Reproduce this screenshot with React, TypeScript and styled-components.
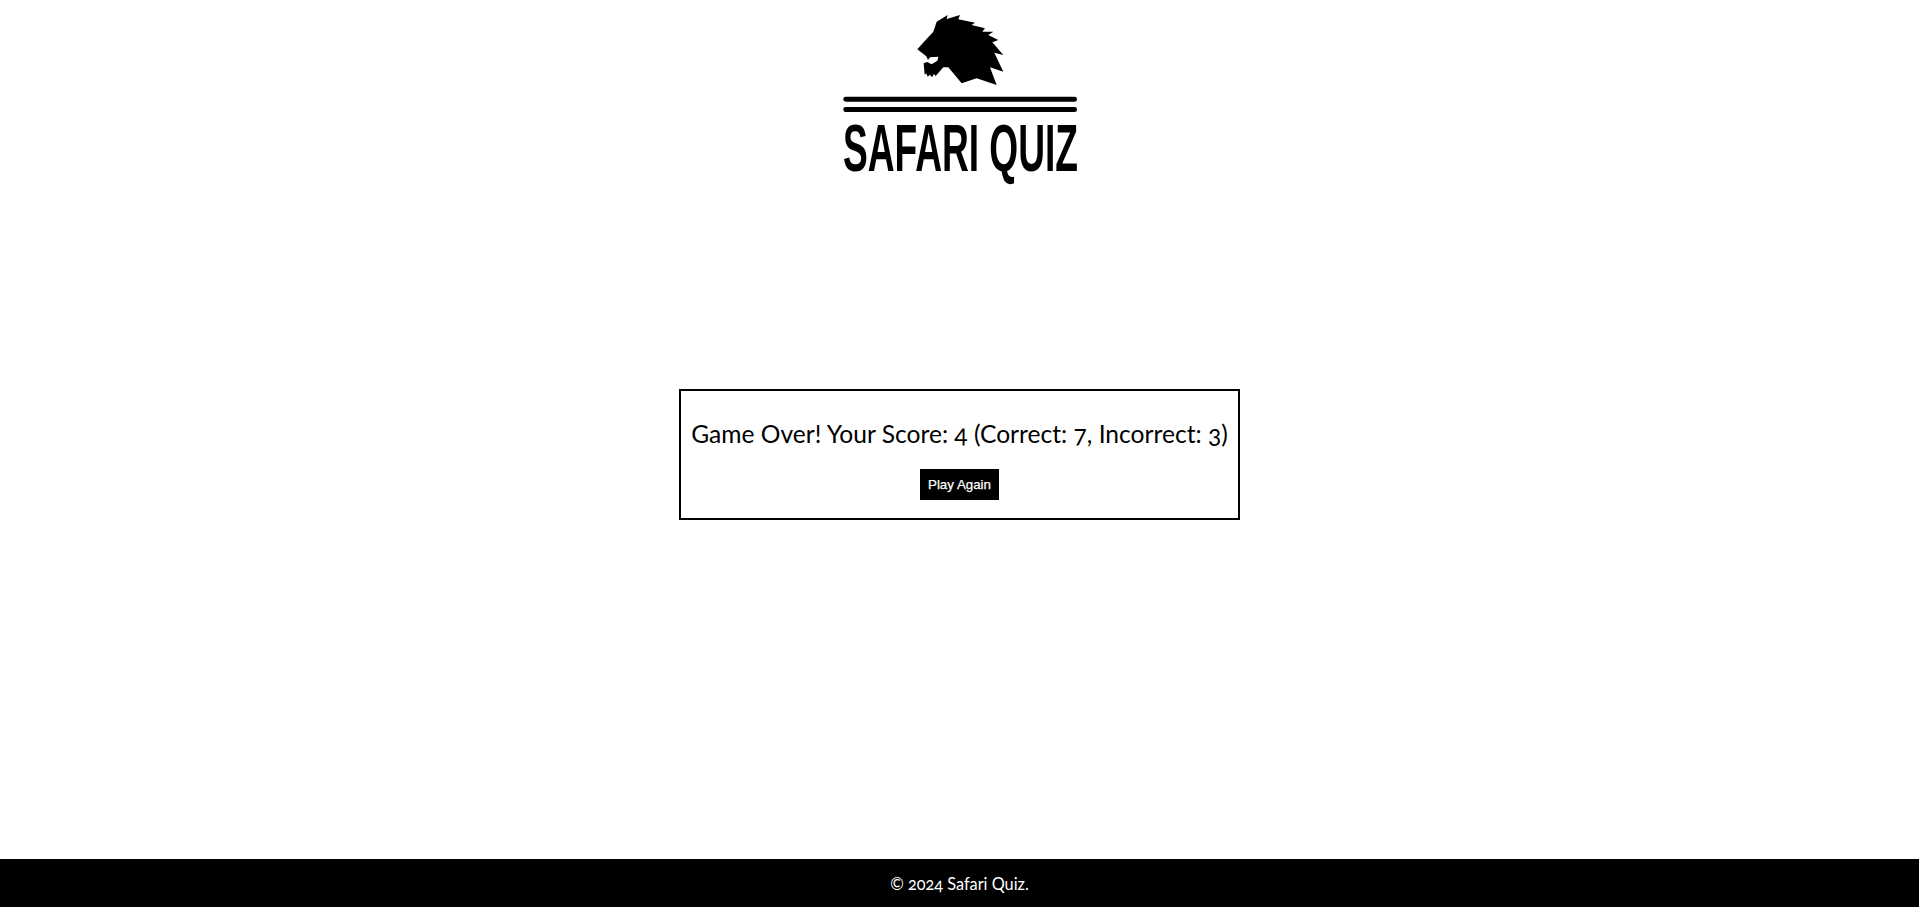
import { FC } from "react"
import styled, { createGlobalStyle } from "styled-components"

const App: FC = () => {
  return (
    <Page>
      <GlobalStyle />
      <Header>
        <Logo />
      </Header>
      <Main>
        <ScoreBox>
          <ScoreText>Game Over! Your Score: 4 (Correct: 7, Incorrect: 3)</ScoreText>
          <PlayButton>Play Again</PlayButton>
        </ScoreBox>
      </Main>
      <Footer>© 2024 Safari Quiz.</Footer>
    </Page>
  )
}

const Logo: FC = () => (
  <LogoSvg viewBox="-20 0 319 190" aria-label="Safari Quiz">
    <g transform="scale(0.3333)" fill="#000">
      <path d="M292 148 L315 122 L340 95 L350 65 L383 45 L380 57 L420 45 L415 58 L465 68 L455 75 L495 85 L487 95 L520 95 L505 105 L535 120 L517 127 L550 165 L523 158 L550 215 L510 202 L530 255 L470 235 L425 250 L385 202 L370 202 L347 228 L342 222 L336 232 L330 224 L323 230 L319 220 L314 224 L311 190 L322 186 L335 193 L352 182 L355 170 L330 172 L324 180 L319 169 Z" />
      <rect x="70" y="290" width="701" height="15" rx="7" />
      <rect x="70" y="321" width="701" height="15" rx="7" />
    </g>
    <LogoText x="23" y="170.5" textLength="235" lengthAdjust="spacingAndGlyphs">
      SAFARI QUIZ
    </LogoText>
  </LogoSvg>
)

const GlobalStyle = createGlobalStyle`
  html, body {
    margin: 0;
    padding: 0;
    background: #fff;
    font-family: "Lato", "Open Sans", sans-serif;
  }
`

const Page = styled.div`
  min-height: 100vh;
  display: flex;
  flex-direction: column;
`

const Header = styled.header`
  display: flex;
  justify-content: center;
  height: 190px;
`

const LogoSvg = styled.svg`
  display: block;
  width: 319px;
  height: 190px;
`

const LogoText = styled.text`
  font-family: "Liberation Sans Narrow", "Liberation Sans", sans-serif;
  font-weight: 700;
  font-size: 66px;
  fill: #000;
`

const Main = styled.main`
  flex: 1;
  display: flex;
  justify-content: center;
  align-items: flex-start;
  padding-top: 199px;
`

const ScoreBox = styled.div`
  box-sizing: border-box;
  width: 561px;
  height: 131px;
  border: 2px solid #000;
  display: flex;
  flex-direction: column;
  align-items: center;
  padding-top: 28px;
`

const ScoreText = styled.h2`
  margin: 0 0 21px;
  font-size: 24.6px;
  line-height: 29px;
  font-weight: 400;
  color: #000;
  white-space: nowrap;
  font-variant-numeric: oldstyle-nums;
`

const PlayButton = styled.button`
  height: 31px;
  padding: 0 8px;
  border: 0;
  background: #000;
  color: #fff;
  font-family: "Liberation Sans", Arial, sans-serif;
  font-size: 13.33px;
  font-weight: 400;
  -webkit-text-stroke: 0.25px #fff;
  cursor: pointer;
`

const Footer = styled.footer`
  height: 48px;
  background: #000;
  color: #fff;
  display: flex;
  align-items: center;
  justify-content: center;
  font-size: 16.3px;
  font-variant-numeric: oldstyle-nums;
`

export default App
